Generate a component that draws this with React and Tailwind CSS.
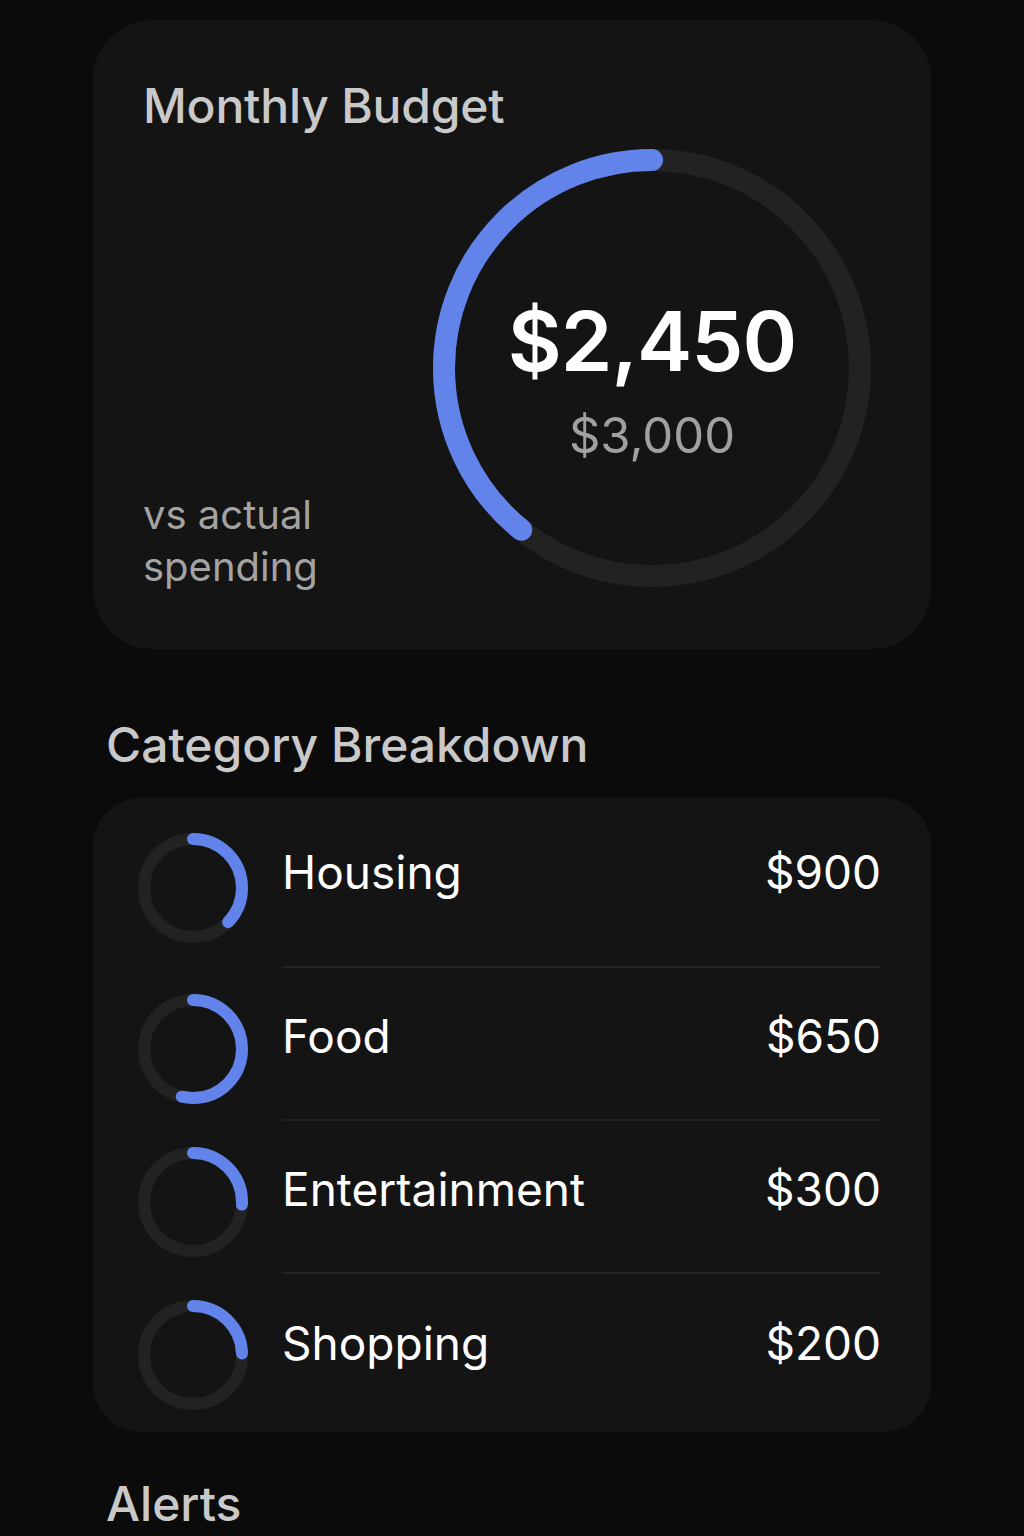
const categories = [
  { name: "Housing", amount: "$900", deg: 134 },
  { name: "Food", amount: "$650", deg: 193 },
  { name: "Entertainment", amount: "$300", deg: 93 },
  { name: "Shopping", amount: "$200", deg: 88 },
];

function Ring({ size, r, stroke, deg, reverse, className = "" }) {
  const mid = size / 2;
  const circ = 2 * Math.PI * r;
  const len = (deg / 360) * circ;
  const turn = reverse
    ? `translate(${size} 0) scale(-1 1) rotate(-90 ${mid} ${mid})`
    : `rotate(-90 ${mid} ${mid})`;
  return (
    <svg width={size} height={size} viewBox={`0 0 ${size} ${size}`} className={`shrink-0 ${className}`}>
      <circle cx={mid} cy={mid} r={r} fill="none" stroke="#222222" strokeWidth={stroke} />
      <circle
        cx={mid}
        cy={mid}
        r={r}
        fill="none"
        stroke="#6283ea"
        strokeWidth={stroke}
        strokeLinecap="round"
        strokeDasharray={`${len} ${circ}`}
        transform={turn}
      />
    </svg>
  );
}

export default function App() {
  return (
    <div className="min-h-[1536px] bg-[#0b0b0b] font-['Inter',sans-serif] overflow-hidden">
      <div className="mx-auto w-[838px] pt-[20px]">
        {/* budget card */}
        <div className="rounded-[60px] bg-[#141414] pt-[58px] pl-[50px] pr-[59px] pb-[61px]">
          <h1 className="text-[48px] leading-[56px] font-medium text-[#c9c9c9] tracking-[-0.2px]">
            Monthly Budget
          </h1>
          <div className="mt-[14px] flex items-end justify-between">
            <p className="text-[40px] leading-[52px] text-[#a3a3a3] mb-[-5px]">
              vs actual
              <br />
              spending
            </p>
            <div className="relative">
              <Ring size={440} r={208} stroke={22} deg={141} reverse />
              <div className="absolute inset-0 flex flex-col items-center justify-center pt-[24px]">
                <span className="text-[83px] leading-none font-semibold text-white tracking-[-1px]">
                  $2,450
                </span>
                <span className="mt-[28px] text-[49px] leading-none text-[#a0a0a0]">$3,000</span>
              </div>
            </div>
          </div>
        </div>

        <h2 className="mt-[68px] pl-[13px] text-[48px] leading-[56px] font-medium text-[#c9c9c9]">
          Category Breakdown
        </h2>

        {/* category list */}
        <div className="mt-[25px] rounded-[48px] bg-[#141414] pl-[44px] pr-[50px] pt-[10px] pb-[5px]">
          {categories.map((c, i) => (
            <div
              key={c.name}
              className={`flex items-center ${i === 0 ? "h-[160px]" : "h-[153px]"}`}
            >
              <Ring size={112} r={49} stroke={12} deg={c.deg} className={i === 0 ? "" : "mt-[8px]"} />
              <div
                className={`ml-[33px] flex flex-1 self-stretch items-center justify-between ${
                  i === 0 ? "pb-[30px]" : "pb-[15px]"
                } ${i < categories.length - 1 ? "border-b-2 border-[#232323]" : ""}`}
              >
                <span className="text-[46px] text-white">{c.name}</span>
                <span className="text-[46px] text-white">{c.amount}</span>
              </div>
            </div>
          ))}
        </div>

        <h2 className="mt-[44px] pl-[13px] text-[48px] leading-[56px] font-medium text-[#c9c9c9]">
          Alerts
        </h2>
      </div>
    </div>
  );
}
